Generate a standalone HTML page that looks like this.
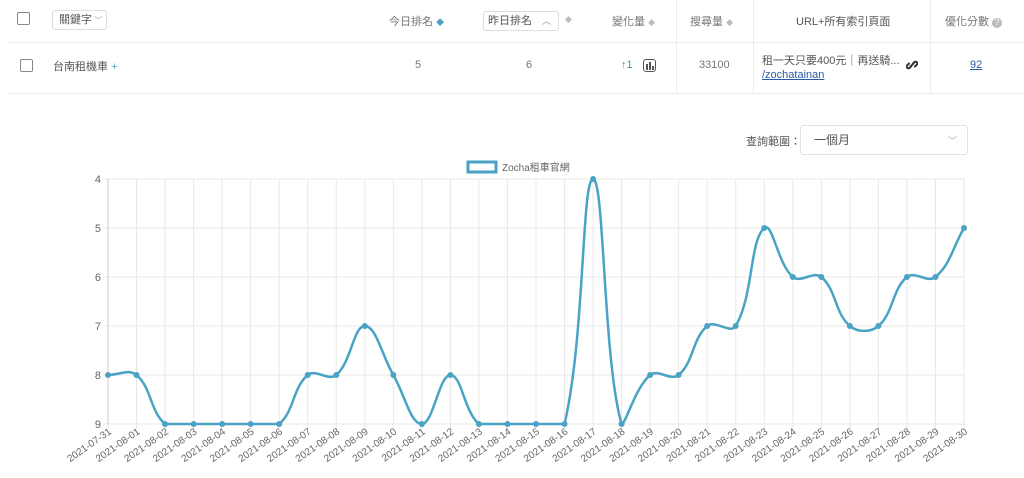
<!DOCTYPE html>
<html><head><meta charset="utf-8"><style>
body{margin:0;width:1024px;height:478px;background:#fff;font-family:"Liberation Sans","Noto Sans CJK TC",sans-serif;color:#777;font-size:11px;position:relative;overflow:hidden}
.a{position:absolute;white-space:nowrap}
.cb{position:absolute;width:11px;height:11px;border:1px solid #888;border-radius:2px}
.line{position:absolute;height:1px;background:#ececec}
.vl{position:absolute;width:1px;background:#ececec}
.sort{color:#bbb;font-size:7px}
</style></head><body>
<div class="line" style="left:8px;top:42px;width:1016px"></div>
<div class="line" style="left:8px;top:93px;width:1016px"></div>
<div class="vl" style="left:676px;top:0;height:93px"></div>
<div class="vl" style="left:753px;top:0;height:93px"></div>
<div class="vl" style="left:930px;top:0;height:93px"></div>

<div class="cb" style="left:17px;top:12px"></div>
<div class="a" style="left:52px;top:10px;width:55px;height:20px;border:1px solid #ddd;border-radius:3px;line-height:18px;padding-left:6px;box-sizing:border-box;color:#555">關鍵字<span style="font-size:8px;color:#999"> ﹀</span></div>
<div class="a" style="left:389px;top:13px">今日排名 <span style="color:#4aa3c4;font-size:8px">◆</span></div>
<div class="a" style="left:483px;top:11px;width:76px;height:20px;border:1px solid #ddd;border-radius:3px;box-sizing:border-box;line-height:18px;padding-left:4px;color:#555">昨日排名<span style="position:absolute;left:58px;color:#999;font-size:9px">︿</span></div>
<div class="a sort" style="left:565px;top:15px">◆</div>
<div class="a" style="left:612px;top:13px">變化量 <span class="sort">◆</span></div>
<div class="a" style="left:690px;top:13px">搜尋量 <span class="sort">◆</span></div>
<div class="a" style="left:796px;top:13px;color:#555">URL+所有索引頁面</div>
<div class="a" style="left:945px;top:13px">優化分數 <span style="display:inline-block;width:10px;height:10px;border-radius:50%;background:#bbb;color:#fff;font-size:8px;text-align:center;line-height:10px">?</span></div>

<div class="cb" style="left:20px;top:59px"></div>
<div class="a" style="left:53px;top:58px;color:#555">台南租機車 <span style="color:#4aa3c4">+</span></div>
<div class="a" style="left:415px;top:59px">5</div>
<div class="a" style="left:526px;top:59px">6</div>
<div class="a" style="left:621px;top:59px;color:#4a9a6a">↑1</div>
<div class="a" style="left:643px;top:59px;width:11px;height:11px;border:1.5px solid #555;border-radius:3px"><span style="position:absolute;left:2px;top:4px;width:1.5px;height:6px;background:#555"></span><span style="position:absolute;left:5px;top:2px;width:1.5px;height:8px;background:#555"></span><span style="position:absolute;left:8px;top:6px;width:1.5px;height:4px;background:#555"></span></div>
<div class="a" style="left:699px;top:59px">33100</div>
<div class="a" style="left:762px;top:52px;color:#555">租一天只要400元｜再送騎...</div>
<div class="a" style="left:762px;top:69px;color:#2a5caa;text-decoration:underline">/zochatainan</div>
<svg class="a" style="left:906px;top:59px" width="12" height="12" viewBox="0 0 12 12"><g fill="none" stroke="#333" stroke-width="2" stroke-linecap="round"><path d="M5 7.5 L3.5 9 a1.8 1.8 0 0 1 -2.5 -2.5 L3 4.5"/><path d="M7 4.5 L8.5 3 a1.8 1.8 0 0 1 2.5 2.5 L9 7.5"/><path d="M4.5 7.5 L7.5 4.5"/></g></svg>
<div class="a" style="left:970px;top:59px;color:#2a5caa;text-decoration:underline">92</div>

<div class="a" style="left:746px;top:133px;color:#555">查詢範圍：</div>
<div class="a" style="left:800px;top:125px;width:168px;height:30px;border:1px solid #e2e2e2;border-radius:3px;box-sizing:border-box;line-height:28px;padding-left:13px;color:#555;font-size:12px">一個月<span style="position:absolute;right:10px;top:1px;color:#aaa;font-size:9px">﹀</span></div>

<svg class="a" style="left:0;top:0" width="1024" height="478" font-family="Liberation Sans, Noto Sans CJK TC, sans-serif">
<g id="grid" stroke="#e8e8e8" stroke-width="1"></g>
<line x1="108" y1="179" x2="108" y2="424" stroke="#ccc"/>
<rect x="468" y="162" width="28" height="10" fill="#fff" stroke="#4aa3c4" stroke-width="3"/>
<text x="502" y="171" font-size="10" fill="#666">Zocha租車官網</text>
<g font-size="11" fill="#666" text-anchor="end">
<text x="101" y="183">4</text><text x="101" y="232">5</text><text x="101" y="281">6</text><text x="101" y="330">7</text><text x="101" y="379">8</text><text x="101" y="428">9</text>
</g>
<path id="curve" fill="none" stroke="#4aa3c4" stroke-width="2.5"/>
<g id="dots" fill="#4aa3c4"></g>
<g font-size="10" fill="#666" text-anchor="end">
<text transform="translate(112,433) rotate(-35)">2021-07-31</text>
<text transform="translate(140.5,433) rotate(-35)">2021-08-01</text>
<text transform="translate(169,433) rotate(-35)">2021-08-02</text>
<text transform="translate(197.6,433) rotate(-35)">2021-08-03</text>
<text transform="translate(226.1,433) rotate(-35)">2021-08-04</text>
<text transform="translate(254.7,433) rotate(-35)">2021-08-05</text>
<text transform="translate(283.2,433) rotate(-35)">2021-08-06</text>
<text transform="translate(311.7,433) rotate(-35)">2021-08-07</text>
<text transform="translate(340.3,433) rotate(-35)">2021-08-08</text>
<text transform="translate(368.8,433) rotate(-35)">2021-08-09</text>
<text transform="translate(397.3,433) rotate(-35)">2021-08-10</text>
<text transform="translate(425.9,433) rotate(-35)">2021-08-11</text>
<text transform="translate(454.4,433) rotate(-35)">2021-08-12</text>
<text transform="translate(482.9,433) rotate(-35)">2021-08-13</text>
<text transform="translate(511.5,433) rotate(-35)">2021-08-14</text>
<text transform="translate(540,433) rotate(-35)">2021-08-15</text>
<text transform="translate(568.5,433) rotate(-35)">2021-08-16</text>
<text transform="translate(597.1,433) rotate(-35)">2021-08-17</text>
<text transform="translate(625.6,433) rotate(-35)">2021-08-18</text>
<text transform="translate(654.1,433) rotate(-35)">2021-08-19</text>
<text transform="translate(682.7,433) rotate(-35)">2021-08-20</text>
<text transform="translate(711.2,433) rotate(-35)">2021-08-21</text>
<text transform="translate(739.7,433) rotate(-35)">2021-08-22</text>
<text transform="translate(768.3,433) rotate(-35)">2021-08-23</text>
<text transform="translate(796.8,433) rotate(-35)">2021-08-24</text>
<text transform="translate(825.3,433) rotate(-35)">2021-08-25</text>
<text transform="translate(853.9,433) rotate(-35)">2021-08-26</text>
<text transform="translate(882.4,433) rotate(-35)">2021-08-27</text>
<text transform="translate(910.9,433) rotate(-35)">2021-08-28</text>
<text transform="translate(939.5,433) rotate(-35)">2021-08-29</text>
<text transform="translate(968,433) rotate(-35)">2021-08-30</text>
</g>
</svg>
<script>
var v=[8,8,9,9,9,9,9,8,8,7,8,9,8,9,9,9,9,4,9,8,8,7,7,5,6,6,7,7,6,6,5];
var ns="http://www.w3.org/2000/svg",g=document.getElementById('grid'),d=document.getElementById('dots');
var h=856/30;function X(i){return 108+i*h}function Y(k){return 179+(k-4)*49}
for(var i=0;i<31;i++){var l=document.createElementNS(ns,'line');l.setAttribute('x1',X(i));l.setAttribute('x2',X(i));l.setAttribute('y1',179);l.setAttribute('y2',429);g.appendChild(l);}
for(var k=4;k<=9;k++){var l=document.createElementNS(ns,'line');l.setAttribute('x1',103);l.setAttribute('x2',964);l.setAttribute('y1',Y(k));l.setAttribute('y2',Y(k));g.appendChild(l);}
var p=v.map(function(y,i){return[X(i),Y(y)]}),n=p.length,t=0.4,cp=[];
function cl(y){return Math.max(179,Math.min(424,y))}
for(var i=0;i<n;i++){var a=p[i-1]||p[i],b=p[i],c=p[i+1]||p[i];
var d01=Math.hypot(b[0]-a[0],b[1]-a[1]),d12=Math.hypot(c[0]-b[0],c[1]-b[1]);
var fa=d01/(d01+d12)||0,fb=d12/(d01+d12)||0;fa*=t;fb*=t;
cp.push({px:b[0]-fa*(c[0]-a[0]),py:cl(b[1]-fa*(c[1]-a[1])),nx:b[0]+fb*(c[0]-a[0]),ny:cl(b[1]+fb*(c[1]-a[1]))});}
var s="M"+p[0][0]+","+p[0][1];
for(var i=0;i<n-1;i++){s+=" C"+cp[i].nx+","+cp[i].ny+" "+cp[i+1].px+","+cp[i+1].py+" "+p[i+1][0]+","+p[i+1][1];}
document.getElementById('curve').setAttribute('d',s);
for(var i=0;i<n;i++){var c=document.createElementNS(ns,'circle');c.setAttribute('cx',p[i][0]);c.setAttribute('cy',p[i][1]);c.setAttribute('r',3);d.appendChild(c);}
</script>
</body></html>
